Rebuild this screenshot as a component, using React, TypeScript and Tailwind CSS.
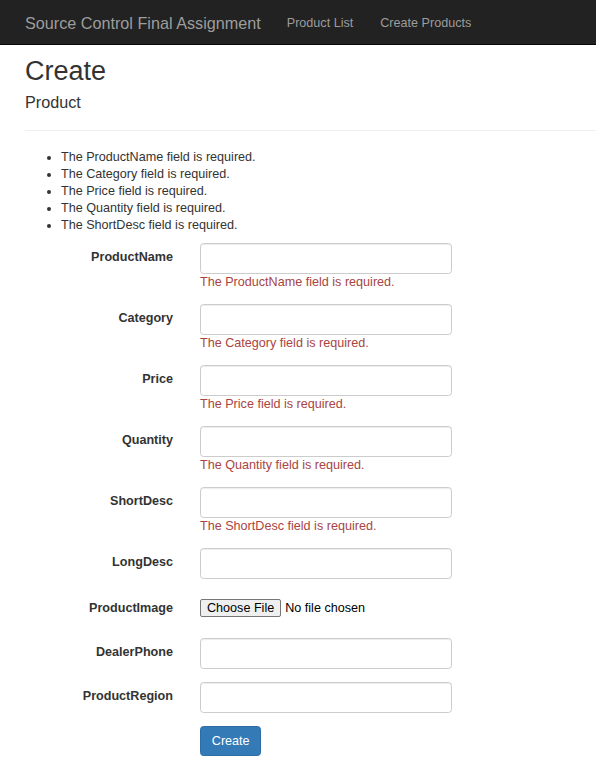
import React from "react";

type Field = { label: string; error?: string };

const fields: Field[] = [
  { label: "ProductName", error: "The ProductName field is required." },
  { label: "Category", error: "The Category field is required." },
  { label: "Price", error: "The Price field is required." },
  { label: "Quantity", error: "The Quantity field is required." },
  { label: "ShortDesc", error: "The ShortDesc field is required." },
];

function TextInput() {
  return (
    <input
      type="text"
      className="block w-[252px] h-[31px] border border-[#ccc] rounded-[3.6px] bg-white shadow-[inset_0_1px_1px_rgba(0,0,0,0.075)] outline-none"
    />
  );
}

function Label({ children }: { children: React.ReactNode }) {
  return (
    <label className="w-[148px] shrink-0 text-right font-bold pt-[5px] leading-[18px] text-[#333]">
      {children}
    </label>
  );
}

export default function App() {
  return (
    <div
      className="min-h-[768px] bg-white text-[#333] text-[12.6px] leading-[18px]"
      style={{ fontFamily: '"Liberation Sans", Arial, Helvetica, sans-serif' }}
    >
      <nav className="h-[45px] bg-[#222] border-b border-[#080808] flex items-center pl-[25px]">
        <a className="text-[16.2px] leading-[18px] text-[#9d9d9d] mt-[1px]">Source Control Final Assignment</a>
        <ul className="flex gap-[27px] ml-[26px] mt-[1px]">
          <li className="text-[#9d9d9d]">Product List</li>
          <li className="text-[#9d9d9d]">Create Products</li>
        </ul>
      </nav>

      <main className="pl-[25px]">
        <h2 className="text-[27px] leading-[30px] mt-[11px] font-normal">Create</h2>
        <h4 className="text-[16.2px] leading-[18px] mt-[7px] font-normal">Product</h4>
        <hr className="mt-[19px] border-0 border-t border-[#eee]" />

        <ul className="list-disc pl-[36px] mt-[18px] leading-[17px]">
          {fields.map((f) => (
            <li key={f.label}>{f.error}</li>
          ))}
        </ul>

        <div className="mt-[9px]">
          {fields.map((f) => (
            <div key={f.label} className="flex mb-[12px]">
              <Label>{f.label}</Label>
              <div className="ml-[27px]">
                <TextInput />
                <span className="block -mt-[1px] mb-[1px] text-[#a94442] leading-[18px]">{f.error}</span>
              </div>
            </div>
          ))}

          <div className="flex mb-[15px]">
            <Label>LongDesc</Label>
            <div className="ml-[27px]">
              <TextInput />
            </div>
          </div>

          <div className="flex mb-[21px]">
            <Label>ProductImage</Label>
            <div className="ml-[27px] pt-[5px] flex items-center">
              <span className="h-[18px] px-[6px] border border-[#767676] rounded-[2px] bg-[#efefef] text-black leading-[16px]">
                Choose File
              </span>
              <span className="ml-[4px] text-black">No file chosen</span>
            </div>
          </div>

          <div className="flex mb-[13px]">
            <Label>DealerPhone</Label>
            <div className="ml-[27px]">
              <TextInput />
            </div>
          </div>

          <div className="flex mb-[13px]">
            <Label>ProductRegion</Label>
            <div className="ml-[27px]">
              <TextInput />
            </div>
          </div>

          <div className="flex">
            <div className="w-[148px] shrink-0" />
            <div className="ml-[27px]">
              <button className="h-[30px] px-[10.8px] bg-[#337ab7] border border-[#2e6da4] rounded-[3.6px] text-white leading-[18px]">
                Create
              </button>
            </div>
          </div>
        </div>
      </main>
    </div>
  );
}
